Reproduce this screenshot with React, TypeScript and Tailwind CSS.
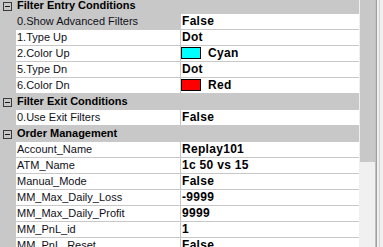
import React from "react";

type Row =
  | { kind: "cat"; label: string }
  | { kind: "prop"; name: string; value: string; selected?: boolean; swatch?: string };

const rows: Row[] = [
  { kind: "cat", label: "Filter Entry Conditions" },
  { kind: "prop", name: "0.Show Advanced Filters", value: "False", selected: true },
  { kind: "prop", name: "1.Type Up", value: "Dot" },
  { kind: "prop", name: "2.Color Up", value: "Cyan", swatch: "#00ffff" },
  { kind: "prop", name: "5.Type Dn", value: "Dot" },
  { kind: "prop", name: "6.Color Dn", value: "Red", swatch: "#ff0000" },
  { kind: "cat", label: "Filter Exit Conditions" },
  { kind: "prop", name: "0.Use Exit Filters", value: "False" },
  { kind: "cat", label: "Order Management" },
  { kind: "prop", name: "Account_Name", value: "Replay101" },
  { kind: "prop", name: "ATM_Name", value: "1c 50 vs 15" },
  { kind: "prop", name: "Manual_Mode", value: "False" },
  { kind: "prop", name: "MM_Max_Daily_Loss", value: "-9999" },
  { kind: "prop", name: "MM_Max_Daily_Profit", value: "9999" },
  { kind: "prop", name: "MM_PnL_id", value: "1" },
  { kind: "prop", name: "MM_PnL_Reset", value: "False" },
];

function Expander() {
  return (
    <div className="ml-[3px] mt-[4px] flex h-[9px] w-[9px] shrink-0 items-center justify-center border border-[#3a3a3a] bg-[#c8c8c8]">
      <div className="h-[1px] w-[5px] bg-[#1a1a1a]" />
    </div>
  );
}

export default function App() {
  return (
    <div
      className="flex h-[247px] w-[383px] overflow-hidden bg-[#f0f0f0] text-[11px] text-black"
      style={{ fontFamily: '"Liberation Sans", Arial, sans-serif' }}
    >
      <div className="h-full w-[359px] shrink-0 overflow-hidden bg-white">
        <div className="-mt-[2px] flex flex-col">
          {rows.map((r, i) =>
            r.kind === "cat" ? (
              <div key={i} className="flex h-[16px] items-start bg-[#c8c8c8]">
                <Expander />
                <span className="ml-[5px] whitespace-nowrap font-bold leading-[15px]">{r.label}</span>
              </div>
            ) : (
              <div key={i} className="flex h-[16px]">
                <div className="w-[16px] shrink-0 bg-[#c8c8c8]" />
                <div
                  className={`w-[165px] shrink-0 whitespace-nowrap border-b border-r border-[#c8c8c8] pl-[1px] leading-[15px] text-[#101018] ${
                    r.selected ? "bg-[#c8c8c8]" : "bg-white"
                  }`}
                >
                  {r.name}
                </div>
                <div className="flex flex-1 items-start whitespace-nowrap border-b border-[#c8c8c8] bg-white text-[12px] font-bold leading-[15px] tracking-[0.3px]">
                  {r.swatch ? (
                    <>
                      <div
                        className="mt-[1px] h-[12px] w-[20px] shrink-0 border border-black"
                        style={{ backgroundColor: r.swatch }}
                      />
                      <span className="ml-[7px]">{r.value}</span>
                    </>
                  ) : (
                    <span className="pl-[1px]">{r.value}</span>
                  )}
                </div>
              </div>
            )
          )}
        </div>
      </div>
      <div className="w-[1px] shrink-0 bg-[#f0f0f0]" />
      <div className="flex h-full w-[15px] shrink-0 flex-col bg-[#f0f0f0]">
        <div className="h-[162px] w-full bg-[#c8c8c8]" />
      </div>
      <div className="w-[1px] shrink-0 bg-[#c0c0c0]" />
      <div className="w-[1px] shrink-0 bg-[#a0a0a0]" />
      <div className="w-[2px] shrink-0 bg-[#f0f0f0]" />
      <div className="w-[1px] shrink-0 bg-[#d4d4d4]" />
      <div className="flex-1 bg-[#f0f0f0]" />
    </div>
  );
}
